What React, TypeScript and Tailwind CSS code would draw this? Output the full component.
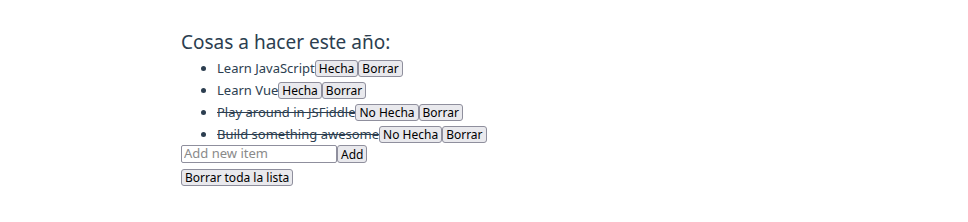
import React from "react";

const items = [
  { text: "Learn JavaScript", done: false },
  { text: "Learn Vue", done: false },
  { text: "Play around in JSFiddle", done: true },
  { text: "Build something awesome", done: true },
];

const btn =
  "inline-block align-baseline text-[12px] leading-[15px] px-[3px] border border-[#8f8f9d] bg-[#e9e9ed] rounded-[3px] text-black";

export default function App() {
  return (
    <div
      className="pl-[181px] pt-[30px] text-[#2c3e50] bg-white min-h-[222px]"
      style={{ fontFamily: '"Noto Sans", "Open Sans", sans-serif' }}
    >
      <h2 className="text-[19px] leading-[24px] font-normal">Cosas a hacer este año:</h2>
      <ul className="list-disc pl-[36px] mt-[3px] text-[13px]">
        {items.map((it) => (
          <li key={it.text} className="h-[22px] leading-[22px]">
            <span className={it.done ? "line-through" : ""}>{it.text}</span>
            <button className={btn}>{it.done ? "No Hecha" : "Hecha"}</button>
            <button className={btn}>Borrar</button>
          </li>
        ))}
      </ul>
      <div className="flex items-stretch">
        <input
          placeholder="Add new item"
          className="w-[156px] h-[18px] text-[13px] px-[2px] border border-[#8f8f9d] rounded-[2px] placeholder:text-[#8a8a8a] text-black"
        />
        <button className={btn}>Add</button>
      </div>
      <div className="mt-[6px] flex">
        <button className={btn}>Borrar toda la lista</button>
      </div>
    </div>
  );
}
